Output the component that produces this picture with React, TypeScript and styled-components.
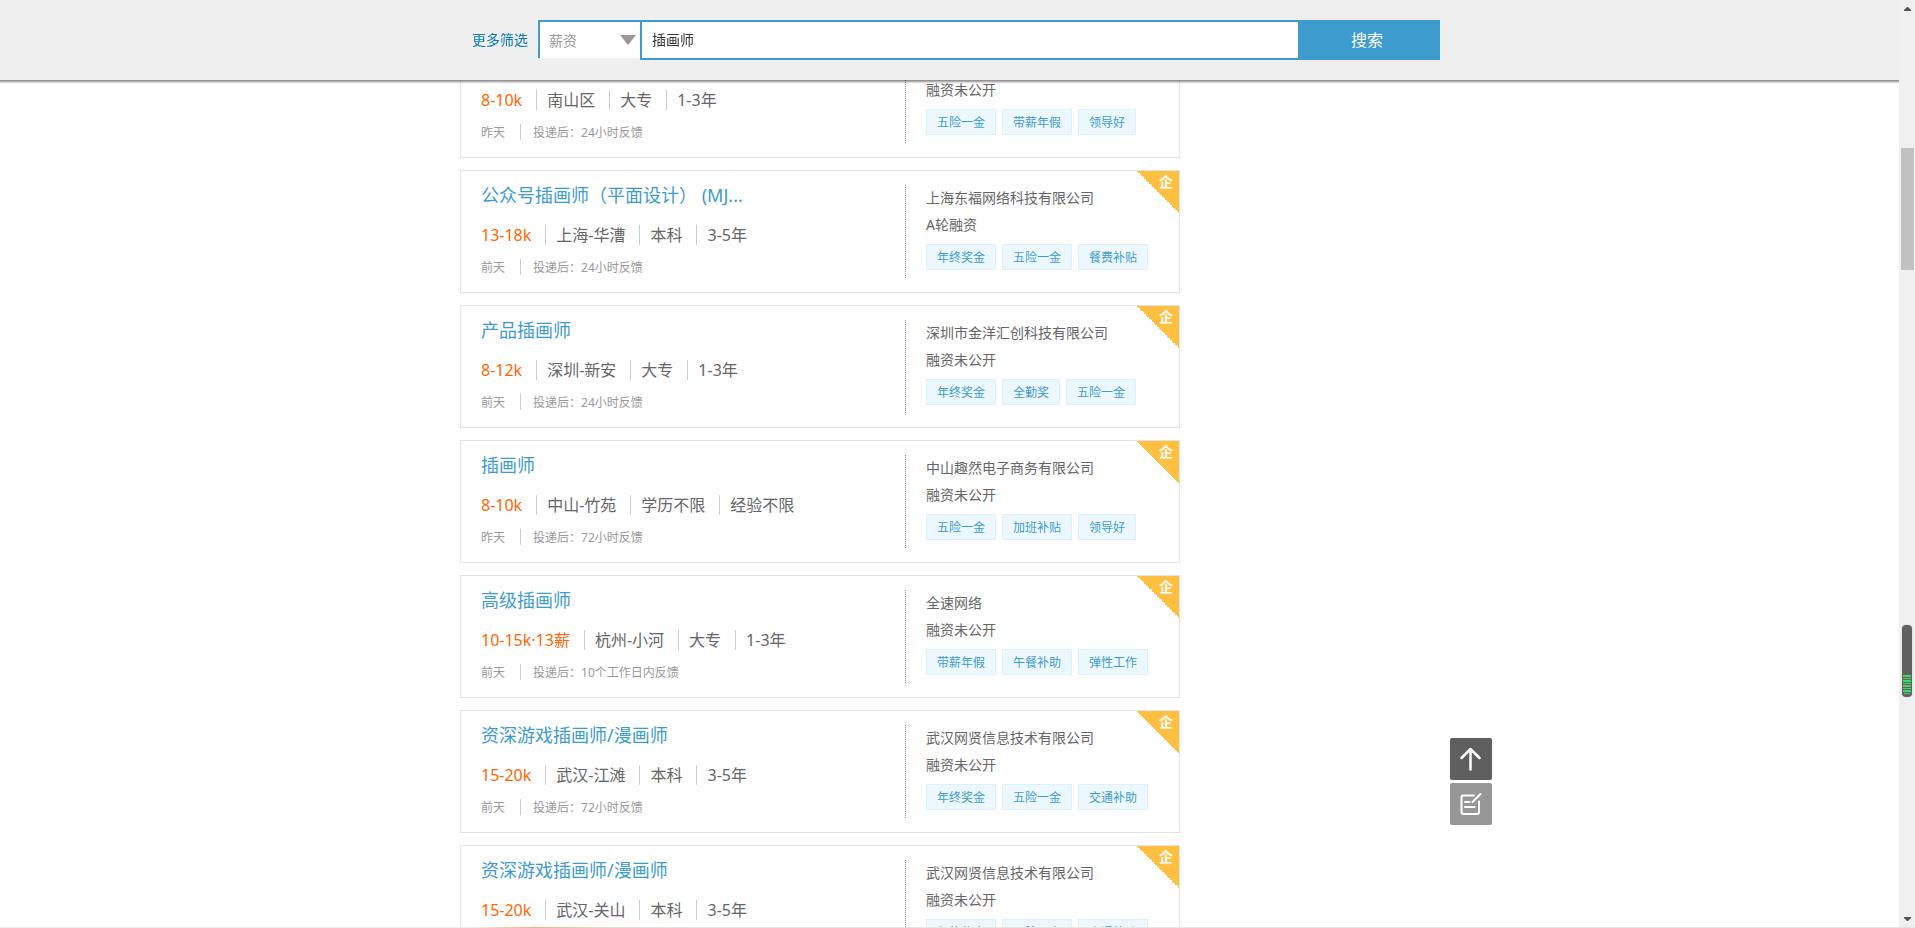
import React from 'react';
import styled, { createGlobalStyle } from 'styled-components';

const GlobalStyle = createGlobalStyle`
  * { box-sizing: border-box; }
  body {
    margin: 0;
    background: #fff;
    color: #666;
    font-family: "Noto Sans", "Noto Sans CJK SC", sans-serif;
    font-size: 14px;
  }
  h2, p, ul { margin: 0; padding: 0; font-weight: 400; }
  ul { list-style: none; }
  a { text-decoration: none; color: inherit; }
  button, input, select { font: inherit; }
`;

const Page = styled.div`
  height: 100vh;
  overflow: hidden;
  padding-right: 15px;
`;

const TopBar = styled.header`
  position: fixed;
  z-index: 2;
  top: 0;
  left: 0;
  right: 0;
  padding: 20px 15px 20px 0;
  background: #efefef;
  box-shadow: 0 1px 2px 1px rgba(0, 0, 0, 0.45);
`;

const SearchForm = styled.form`
  display: flex;
  max-width: 980px;
  height: 40px;
  margin: 0 auto;
  padding-left: 12px;
`;

const MoreLink = styled.a`
  width: 66px;
  line-height: 40px;
  color: #0b7bb5;
`;

const SalaryBox = styled.div`
  position: relative;
  width: 102px;
  height: 38px;
`;

const SalarySelect = styled.select`
  width: 100%;
  height: 100%;
  appearance: none;
  border: 0 solid #3e9bce;
  border-width: 2px 0 0 2px;
  border-radius: 0;
  padding: 0 9px;
  background: #fff;
  color: #999;
`;

const SelectArrow = styled.span`
  position: absolute;
  top: 15px;
  right: 4px;
  border: 8px solid transparent;
  border-top: 10px solid #999;
  border-bottom: 0;
  pointer-events: none;
`;

const KeywordInput = styled.input`
  flex: 1;
  min-width: 0;
  border: 2px solid #3e9bce;
  border-right: 0;
  border-radius: 0;
  padding: 0 10px 2px;
  background: #fff;
  color: #333;
  outline: 0;
`;

const SearchButton = styled.button`
  width: 142px;
  border: 0;
  padding: 0 4px 2px 0;
  background: #3e9bce;
  color: #fff;
  font-size: 16px;
`;

const Content = styled.main`
  max-width: 980px;
  margin: 0 auto;
  padding-top: 35px;
`;

const JobList = styled.ul`
  display: flex;
  flex-direction: column;
  gap: 12px;
  max-width: 720px;
`;

const JobCard = styled.li`
  position: relative;
  display: flex;
  height: 123px;
  padding: 14px 0 14px 20px;
  border: 1px solid #e2e4e4;
  background: #fff;
`;

const JobInfo = styled.div`
  flex: 1;
  min-width: 0;
`;

const JobTitle = styled.h2`
  height: 24px;
  margin-bottom: 16px;
  font-size: 18px;
  line-height: 20px;
  color: #3e9bce;
`;

const MetaRow = styled.div`
  display: flex;
  height: 20px;
  margin-bottom: 14px;
  line-height: 20px;
  font-size: 16px;
`;

const MetaItem = styled.span<{ $accent?: boolean }>`
  padding-right: 14px;
  color: ${(p) => (p.$accent ? '#ff6600' : 'inherit')};
  & + & {
    border-left: 1px solid #ccc;
    padding-left: 10px;
  }
`;

const FeedbackRow = styled.div`
  display: flex;
  height: 16px;
  line-height: 18px;
  font-size: 12px;
  color: #999;
`;

const FeedbackItem = styled.span`
  padding-right: 15px;
  & + & {
    border-left: 1px solid #ccc;
    padding-left: 12px;
  }
`;

const CompanyInfo = styled.div`
  width: 274px;
  height: 93px;
  padding-left: 20px;
  border-left: 1px dotted #7a919e;
`;

const CompanyLine = styled.p`
  height: 27px;
  line-height: 25px;
`;

const Tags = styled.ul`
  display: flex;
  gap: 6px;
  margin-top: 5px;
`;

const Tag = styled.li`
  height: 26px;
  padding: 0 10px;
  border: 1px solid #def1fb;
  background: #edf8fe;
  color: #3e9bce;
  font-size: 12px;
  line-height: 26px;
`;

const Ribbon = styled.span`
  position: absolute;
  top: 0;
  right: 0;
  width: 42px;
  height: 42px;
  padding-right: 6px;
  background: linear-gradient(45deg, transparent 50%, #ffc042 50%);
  color: #fff;
  font-size: 14px;
  font-weight: 700;
  line-height: 22px;
  text-align: right;
`;

const SideTools = styled.div`
  position: fixed;
  left: calc(50% + 492px);
  bottom: 103px;
  display: flex;
  flex-direction: column;
  gap: 3px;
`;

const ToolButton = styled.button<{ $dark?: boolean }>`
  display: grid;
  place-items: center;
  width: 42px;
  height: 42px;
  padding: 0;
  border: 0;
  border-radius: 2px;
  background: ${(p) => (p.$dark ? '#5f5f5f' : '#979797')};
`;

const ScrollTrack = styled.div`
  position: fixed;
  z-index: 3;
  top: 0;
  right: 0;
  bottom: 0;
  width: 16px;
  display: flex;
  flex-direction: column;
  align-items: center;
  padding: 7px 0;
  background: #f0f0f0;
`;

const ScrollArrow = styled.svg`
  display: block;
  width: 7px;
  height: 4px;
`;

const ScrollSpace = styled.div<{ $grow: number }>`
  flex: ${(p) => p.$grow} 1 0;
`;

const ScrollThumb = styled.div`
  flex: 122 1 0;
  width: 13px;
  background: #c1c1c1;
`;

const Meter = styled.svg`
  position: fixed;
  z-index: 4;
  top: 67%;
  right: 0;
  width: 16px;
  height: 80px;
`;

const BottomEdge = styled.div`
  position: fixed;
  z-index: 5;
  left: 0;
  right: 0;
  bottom: 0;
  height: 1px;
  background: linear-gradient(90deg, #eee 24%, #f6e6dc 25%, #ecae7c 28%, #f0d8c4 31%, #dce8e6 35%, #ece4dc 50%, #e6e6e2);
`;

type Job = {
  title: string;
  meta: string[];
  posted: string;
  feedback: string;
  company: string;
  funding: string;
  tags: string[];
};

const jobs: Job[] = [
  { title: '插画师', meta: ['8-10k', '南山区', '大专', '1-3年'], posted: '昨天', feedback: '24小时反馈', company: '深圳公司', funding: '融资未公开', tags: ['五险一金', '带薪年假', '领导好'] },
  { title: '公众号插画师（平面设计） (MJ...', meta: ['13-18k', '上海-华漕', '本科', '3-5年'], posted: '前天', feedback: '24小时反馈', company: '上海东福网络科技有限公司', funding: 'A轮融资', tags: ['年终奖金', '五险一金', '餐费补贴'] },
  { title: '产品插画师', meta: ['8-12k', '深圳-新安', '大专', '1-3年'], posted: '前天', feedback: '24小时反馈', company: '深圳市金洋汇创科技有限公司', funding: '融资未公开', tags: ['年终奖金', '全勤奖', '五险一金'] },
  { title: '插画师', meta: ['8-10k', '中山-竹苑', '学历不限', '经验不限'], posted: '昨天', feedback: '72小时反馈', company: '中山趣然电子商务有限公司', funding: '融资未公开', tags: ['五险一金', '加班补贴', '领导好'] },
  { title: '高级插画师', meta: ['10-15k·13薪', '杭州-小河', '大专', '1-3年'], posted: '前天', feedback: '10个工作日内反馈', company: '全速网络', funding: '融资未公开', tags: ['带薪年假', '午餐补助', '弹性工作'] },
  { title: '资深游戏插画师/漫画师', meta: ['15-20k', '武汉-江滩', '本科', '3-5年'], posted: '前天', feedback: '72小时反馈', company: '武汉网贤信息技术有限公司', funding: '融资未公开', tags: ['年终奖金', '五险一金', '交通补助'] },
  { title: '资深游戏插画师/漫画师', meta: ['15-20k', '武汉-关山', '本科', '3-5年'], posted: '前天', feedback: '72小时反馈', company: '武汉网贤信息技术有限公司', funding: '融资未公开', tags: ['年终奖金', '五险一金', '交通补助'] },
];

function JobRow({ job }: { job: Job }) {
  return (
    <JobCard>
      <JobInfo>
        <JobTitle><a href="#job">{job.title}</a></JobTitle>
        <MetaRow>
          {job.meta.map((m, i) => <MetaItem key={m} $accent={i === 0}>{m}</MetaItem>)}
        </MetaRow>
        <FeedbackRow>
          <FeedbackItem>{job.posted}</FeedbackItem>
          <FeedbackItem>投递后：{job.feedback}</FeedbackItem>
        </FeedbackRow>
      </JobInfo>
      <CompanyInfo>
        <CompanyLine><a href="#company">{job.company}</a></CompanyLine>
        <CompanyLine>{job.funding}</CompanyLine>
        <Tags>{job.tags.map((t) => <Tag key={t}>{t}</Tag>)}</Tags>
      </CompanyInfo>
      <Ribbon>企</Ribbon>
    </JobCard>
  );
}

export default function App() {
  return (
    <>
      <GlobalStyle />
      <TopBar>
        <SearchForm onSubmit={(e) => e.preventDefault()}>
          <MoreLink href="#filters">更多筛选</MoreLink>
          <SalaryBox>
            <SalarySelect aria-label="薪资"><option>薪资</option></SalarySelect>
            <SelectArrow />
          </SalaryBox>
          <KeywordInput type="text" aria-label="关键词" defaultValue="插画师" />
          <SearchButton type="submit">搜索</SearchButton>
        </SearchForm>
      </TopBar>
      <Page>
        <Content>
          <JobList>{jobs.map((job, i) => <JobRow key={i} job={job} />)}</JobList>
        </Content>
      </Page>
      <SideTools>
        <ToolButton type="button" $dark aria-label="返回顶部">
          <svg width="22" height="24" viewBox="0 0 22 24" fill="none" stroke="#fff" strokeWidth="2.500" strokeLinecap="round" strokeLinejoin="round">
            <path d="M10.500 22.500V2M1.500 11L10.500 2L19.500 11" />
          </svg>
        </ToolButton>
        <ToolButton type="button" aria-label="意见反馈">
          <svg width="22" height="24" viewBox="0 0 22 24" fill="none" stroke="#fff" strokeWidth="2" strokeLinecap="round" strokeLinejoin="round">
            <path d="M14 3.500H3.500Q1.500 3.500 1.500 5.500V20Q1.500 22 3.500 22H17Q19 22 19 20V9.500M12.500 10L20.500 2M5 10H9.500M5 15H14.500" />
          </svg>
        </ToolButton>
      </SideTools>
      <ScrollTrack aria-hidden="true">
        <ScrollArrow viewBox="0 0 7 4" fill="#505050"><path d="M0 4V3L3 0H4L7 3V4Z" /></ScrollArrow>
        <ScrollSpace $grow={137} />
        <ScrollThumb />
        <ScrollSpace $grow={647} />
        <ScrollArrow viewBox="0 0 7 4" fill="#505050"><path d="M0 0V1L3 4H4L7 1V0Z" /></ScrollArrow>
      </ScrollTrack>
      <Meter viewBox="0 0 16 80" aria-hidden="true">
        <rect x="2" y="2" width="12" height="74" rx="5" fill="#e4e4e4" />
        <rect x="3" y="3" width="10" height="72" rx="4" fill="#606060" />
        <path d="M4 54H12M4 59H12M4 64H12M4 69H12" stroke="#3fd667" strokeWidth="2" />
        <path d="M4 56.500H12M4 61.500H12M4 66.500H12M5 71.500H11" stroke="#3fd667" strokeWidth="1" />
      </Meter>
      <BottomEdge />
    </>
  );
}
